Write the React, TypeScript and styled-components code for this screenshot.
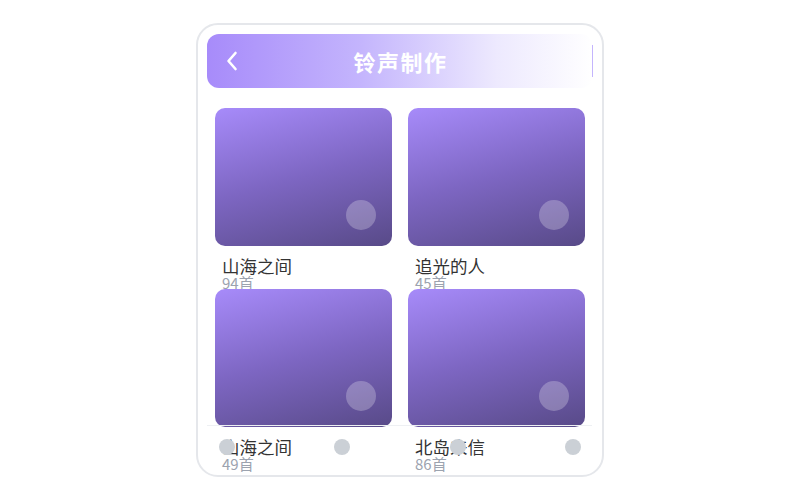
import React from "react";
import styled, { createGlobalStyle } from "styled-components";

const Global = createGlobalStyle`
  html, body { margin: 0; padding: 0; background: #ffffff; }
  body { font-family: "Noto Sans CJK SC", "Noto Sans", sans-serif; }
  * { box-sizing: border-box; }
`;

const Frame = styled.div`
  position: relative;
  width: 408px;
  height: 454px;
  margin: 23px auto 0;
  border: 2px solid #e5e7eb;
  border-radius: 22px;
  overflow: hidden;
  padding: 9px;
  display: flex;
  flex-direction: column;
  background: #fff;
`;

const Header = styled.div`
  height: 54px;
  flex: none;
  border-radius: 12px;
  background: linear-gradient(90deg, #a78bfa 0%, #c4b5fd 40%, #ede9fe 75%, #ffffff 100%);
  display: grid;
  grid-template-columns: 48px 1fr 48px;
  align-items: center;
`;

const BackButton = styled.div`
  display: flex;
  align-items: center;
  justify-content: center;
  padding-left: 2px;
  height: 100%;
`;

const Title = styled.div`
  text-align: center;
  color: #ffffff;
  font-size: 22px;
  font-weight: 700;
  letter-spacing: 1.5px;
  padding-left: 1px;
`;

const RightMark = styled.div`
  justify-self: end;
  width: 1.5px;
  height: 32px;
  background: #c4b5fd;
`;

const Grid = styled.div`
  margin-top: 20px;
  padding: 0 8px;
  display: grid;
  grid-template-columns: 1fr 1fr;
  column-gap: 16px;
  row-gap: 16px;
  grid-auto-rows: 165px;
`;

const Item = styled.div`
  display: flex;
  flex-direction: column;
`;

const Cover = styled.div`
  position: relative;
  height: 138px;
  flex: none;
  border-radius: 10px;
  background: linear-gradient(165deg, #a78bfa 0%, #7d66c2 50%, #584a88 100%);
`;

const PlayDot = styled.div`
  position: absolute;
  right: 16px;
  bottom: 16px;
  width: 30px;
  height: 30px;
  border-radius: 50%;
  background: rgba(255, 255, 255, 0.25);
`;

const Name = styled.div`
  margin-top: 10px;
  padding-left: 7px;
  font-size: 17.5px;
  line-height: 19px;
  color: #333333;
  white-space: nowrap;
`;

const Count = styled.div`
  padding-left: 7px;
  font-size: 15px;
  line-height: 15px;
  color: #9ca3af;
  white-space: nowrap;
`;

const TabBar = styled.div`
  position: absolute;
  left: 9px;
  right: 10px;
  bottom: 8px;
  height: 42px;
  border-top: 1px solid #eef0f3;
  display: flex;
  align-items: center;
  justify-content: space-between;
  padding: 0 11px 0 12px;
`;

const TabDot = styled.div`
  width: 16px;
  height: 16px;
  border-radius: 50%;
  background: #cbd0d6;
`;

const items = [
  { name: "山海之间", count: "94首" },
  { name: "追光的人", count: "45首" },
  { name: "山海之间", count: "49首" },
  { name: "北岛来信", count: "86首" },
];

export default function App() {
  return (
    <>
      <Global />
      <Frame>
        <Header>
          <BackButton>
            <svg width="14" height="22" viewBox="0 0 14 22" fill="none">
              <path d="M10.5 3 L3.5 11 L10.5 19" stroke="#ffffff" strokeWidth="2.6" strokeLinecap="round" strokeLinejoin="round" />
            </svg>
          </BackButton>
          <Title>铃声制作</Title>
          <RightMark />
        </Header>
        <Grid>
          {items.map((it, i) => (
            <Item key={i}>
              <Cover>
                <PlayDot />
              </Cover>
              <Name>{it.name}</Name>
              <Count>{it.count}</Count>
            </Item>
          ))}
        </Grid>
        <TabBar>
          <TabDot />
          <TabDot />
          <TabDot />
          <TabDot />
        </TabBar>
      </Frame>
    </>
  );
}
